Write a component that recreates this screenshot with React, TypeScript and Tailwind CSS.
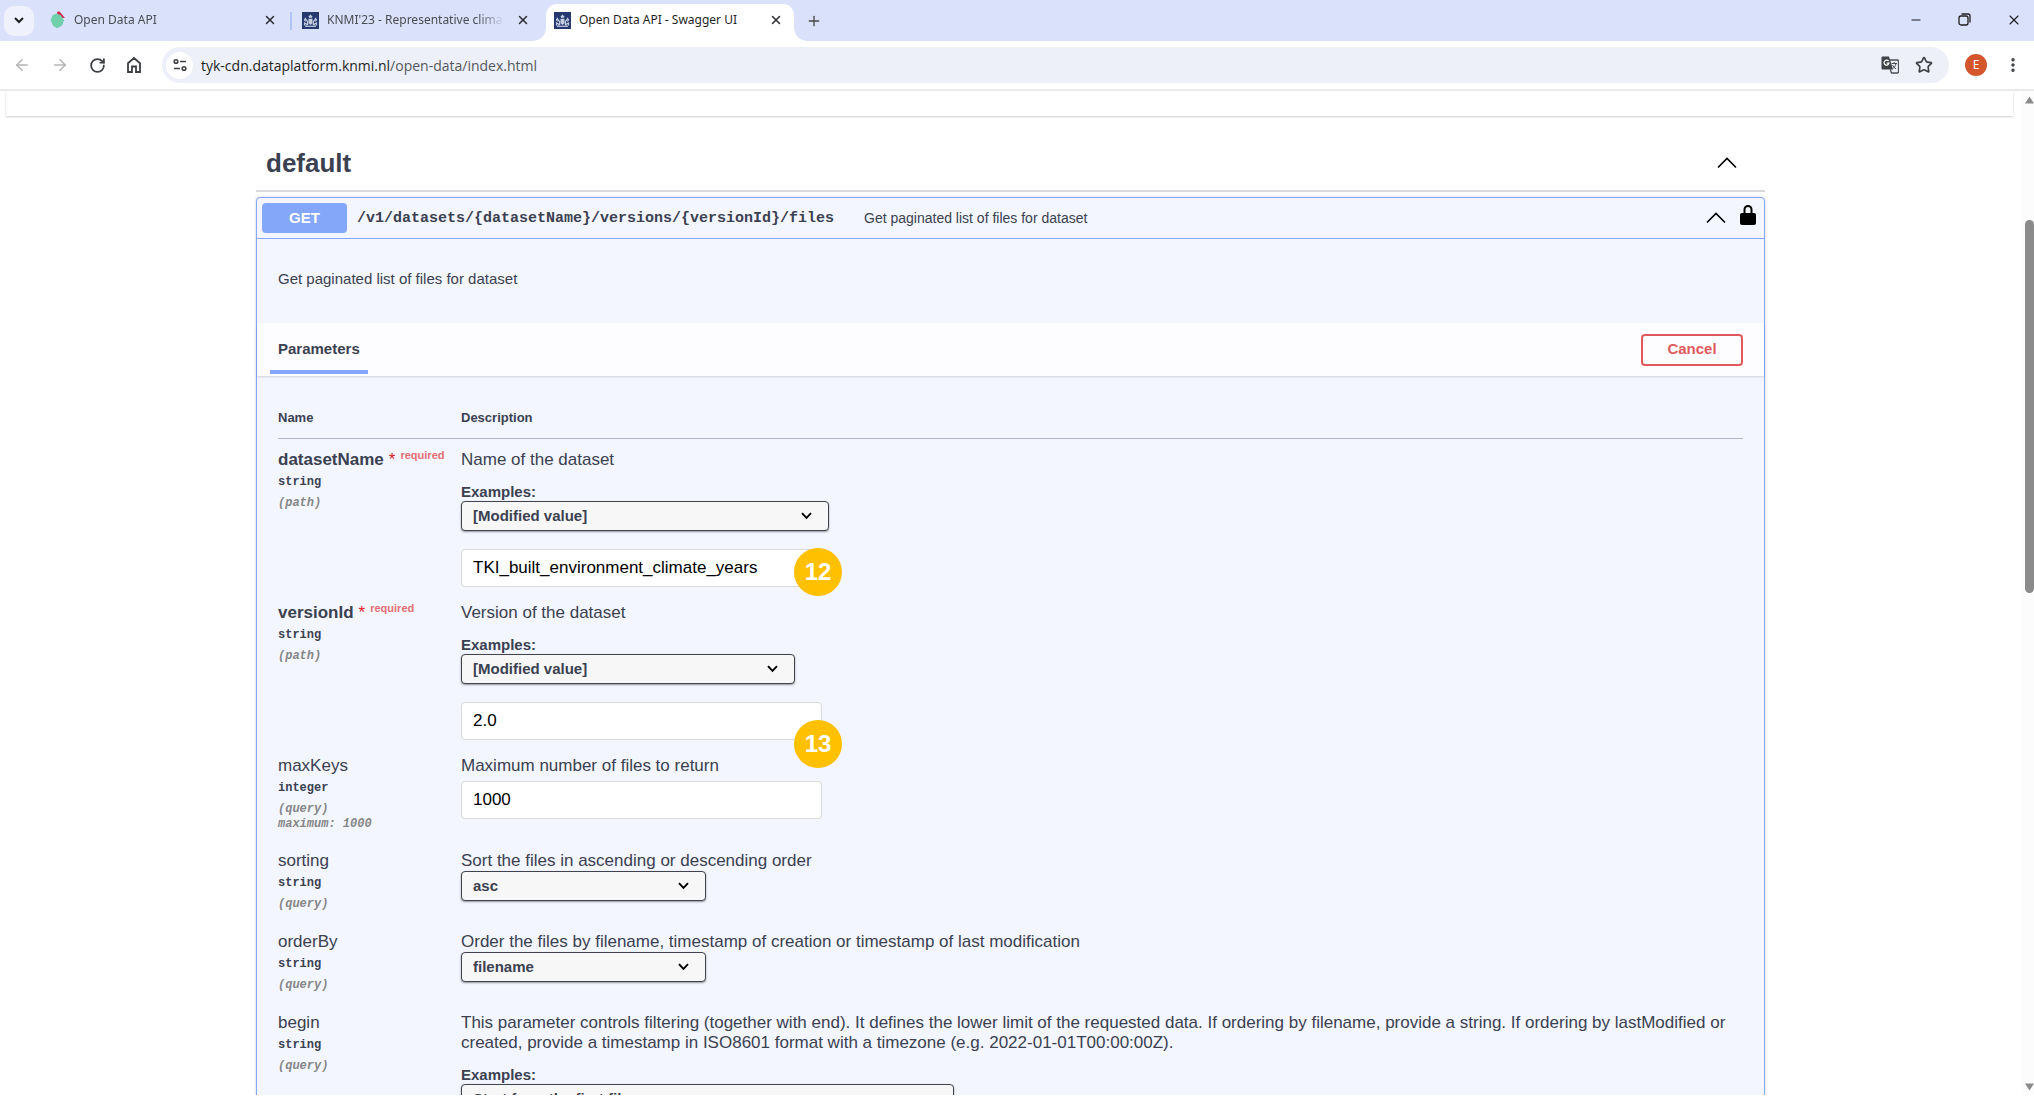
import React from 'react';
import { ArrowLeft, ArrowRight, Minus, MoreVertical, Plus, RotateCw, Star, X } from 'lucide-react';

interface Param {
  name: string;
  type: string;
  location: string;
  required?: boolean;
  note?: string;
  description: string;
  example?: string;
  exampleWidth?: string;
  select?: string;
  value?: string;
  badge?: string;
  badgePosition?: string;
}

const params: Param[] = [
  {
    name: 'datasetName',
    type: 'string',
    location: '(path)',
    required: true,
    description: 'Name of the dataset',
    example: '[Modified value]',
    exampleWidth: 'w-[368px]',
    value: 'TKI_built_environment_climate_years',
    badge: '12',
    badgePosition: '-top-px',
  },
  {
    name: 'versionId',
    type: 'string',
    location: '(path)',
    required: true,
    description: 'Version of the dataset',
    example: '[Modified value]',
    exampleWidth: 'w-[334px]',
    value: '2.0',
    badge: '13',
    badgePosition: 'top-[18px]',
  },
  {
    name: 'maxKeys',
    type: 'integer',
    location: '(query)',
    note: 'maximum: 1000',
    description: 'Maximum number of files to return',
    value: '1000',
  },
  {
    name: 'sorting',
    type: 'string',
    location: '(query)',
    description: 'Sort the files in ascending or descending order',
    select: 'asc',
  },
  {
    name: 'orderBy',
    type: 'string',
    location: '(query)',
    description: 'Order the files by filename, timestamp of creation or timestamp of last modification',
    select: 'filename',
  },
  {
    name: 'begin',
    type: 'string',
    location: '(query)',
    description:
      'This parameter controls filtering (together with end). It defines the lower limit of the requested data. If ordering by filename, provide a string. If ordering by lastModified or created, provide a timestamp in ISO8601 format with a timezone (e.g. 2022-01-01T00:00:00Z).',
    example: 'Start from the first file',
    exampleWidth: 'w-[493px]',
  },
];

const LeafIcon = () => (
  <svg width="16" height="18" viewBox="0 0 16 18" className="shrink-0">
    <path d="M6.500 2.500C3.500 3 1.500 5 1.200 8L.5 10l1.200 1c.5 2.500 1.500 4 2.500 4.500l2.800 1.800 3-1.500c2-.8 3-2.500 3.200-4.500l1-1.300-.9-1.500c0-1.500-.3-2.500-1-3.500L9 2.800z" fill="#6fd0ab" />
    <path d="M7 .8 9.500.5 15 7l-2.500-.2L10.500 4 7.500 3z" fill="#d81f45" />
  </svg>
);

const CrestIcon = () => (
  <svg width="17" height="17" viewBox="0 0 17 17" className="shrink-0">
    <rect width="17" height="17" fill="#25396f" />
    <g fill="#c5cde0">
      <path d="M8.500 2.200 9.200 3.500l1.300.6-.6 1.700H7.100l-.6-1.700 1.300-.6z" />
      <path d="M6.500 6.800h4v4.500L8.500 13l-2-1.700z" />
    </g>
    <g fill="none" stroke="#c5cde0" strokeWidth="1.200">
      <path d="M5.600 13.200V9.500L4.200 8l-.8-1.500L2.500 8l1.200 1.500M2.500 13.500V11l1.800.8v1.700" />
      <path d="M11.400 13.200V9.500L12.800 8l.8-1.500.9 1.500-1.200 1.500M14.500 13.500V11l-1.800.8v1.700" />
      <path d="M3 14.300h11" />
    </g>
  </svg>
);

const HomeIcon = () => (
  <svg width="16" height="18" viewBox="0 0 16 18" fill="none" stroke="#3c3f43" strokeWidth="1.800">
    <path d="M2 7.200 8 2l6 5.200V16h-4v-5.500H6V16H2z" />
  </svg>
);

const TuneIcon = () => (
  <svg width="14" height="14" viewBox="0 0 14 14" fill="none" stroke="#3c3f43" strokeWidth="1.600">
    <circle cx="3" cy="3.500" r="1.800" />
    <path d="M7 3.500h6M1 10.500h6" />
    <circle cx="11" cy="10.500" r="1.800" />
  </svg>
);

const TranslateIcon = () => (
  <svg width="18" height="18" viewBox="0 0 18 18">
    <path d="M1.500.5H8l4 13H1.500a1 1 0 0 1-1-1v-11a1 1 0 0 1 1-1z" fill="#3f4246" />
    <path d="M9 4h7.500a1 1 0 0 1 1 1v11a1 1 0 0 1-1 1h-6L9.300 13.500" fill="none" stroke="#4c4f54" strokeWidth="1.300" />
    <path d="M7.600 5.200A2.500 2.500 0 1 0 8 7.200H5.600" fill="none" stroke="#fff" strokeWidth="1.200" />
    <path d="M10.500 7.500h5.500M13.200 6.200v1.300M15 7.500c-.5 2.500-2 4.500-3.600 5.500M11.500 9c.8 1.500 2 3 3.500 4" fill="none" stroke="#4c4f54" />
  </svg>
);

const ChevronUpThin = () => (
  <svg width="20" height="12" viewBox="0 0 20 12" fill="none" stroke="#000" strokeWidth="1.600">
    <path d="M1 10.500 10 1.500l9 9" />
  </svg>
);

const LockIcon = () => (
  <svg width="16" height="20" viewBox="0 0 16 20">
    <path d="M4.500 9V4.500a3.500 3.500 0 0 1 7 0V9" fill="none" stroke="#000" strokeWidth="2" />
    <rect y="8" width="16" height="12" rx="2" />
  </svg>
);

const Tab = ({ icon, title, active }: { icon: React.ReactNode; title: string; active?: boolean }) => (
  <>
    {icon}
    <span
      className={
        active
          ? 'ml-2 flex-1 whitespace-nowrap text-[#1f1f1f]'
          : 'ml-2 flex-1 whitespace-nowrap text-[#4a4d52] [mask-image:linear-gradient(to_right,black_85%,transparent)]'
      }
    >
      {title}
    </span>
    <button aria-label="Close tab" className="ml-3 text-[#303236]">
      <X size={14} strokeWidth={2.6} />
    </button>
  </>
);

const TabStrip = () => (
  <div className="flex h-[41px] shrink-0 items-center bg-[#d9e1fb] font-['Noto_Sans',sans-serif] text-[12px]">
    <button aria-label="Search tabs" className="ml-1 flex h-[30px] w-[30px] shrink-0 items-center justify-center rounded-[10px] bg-[#eff2fd]">
      <svg width="10" height="7" viewBox="0 0 10 7" fill="none" stroke="#1f1f1f" strokeWidth="2">
        <path d="m1 1 4 4 4-4" />
      </svg>
    </button>
    <div className="ml-4 flex h-full w-[240px] items-center pr-[13px] pb-px">
      <Tab icon={<LeafIcon />} title="Open Data API" />
    </div>
    <div className="h-[18px] w-[2px] bg-[#b3c3f8]" />
    <div className="ml-[10px] flex h-full w-[244px] items-center pr-[16px] pb-px">
      <Tab icon={<CrestIcon />} title="KNMI'23 - Representative clima" />
    </div>
    <div className="relative flex h-[37px] w-[248px] items-center self-end rounded-t-[11px] bg-white px-2 pr-[11px] pb-[5px]">
      <Tab icon={<CrestIcon />} title="Open Data API - Swagger UI" active />
      {/* curved feet */}
      <div className="absolute bottom-0 -left-3 h-3 w-3 bg-[radial-gradient(circle_at_0_0,transparent_11px,white_12px)]" />
      <div className="absolute -right-3 bottom-0 h-3 w-3 bg-[radial-gradient(circle_at_100%_0,transparent_11px,white_12px)]" />
    </div>
    <button aria-label="New tab" className="ml-3 text-[#474747]">
      <Plus size={16} strokeWidth={2} />
    </button>
    <div className="mr-3 ml-auto flex items-center gap-[35px] pb-[2px] text-[#1f1f1f]">
      <button aria-label="Minimize">
        <Minus size={14} strokeWidth={1.8} />
      </button>
      <button aria-label="Restore">
        <svg width="13" height="13" viewBox="0 0 13 13" fill="none" stroke="currentColor" strokeWidth="1.300">
          <rect x="1" y="3" width="9" height="9" rx="2" />
          <path d="M3.500 1H10a2 2 0 0 1 2 2v6.500" />
        </svg>
      </button>
      <button aria-label="Close">
        <X size={16} strokeWidth={1.6} />
      </button>
    </div>
  </div>
);

const Toolbar = () => (
  <div className="flex h-[50px] shrink-0 items-center border-b-2 border-[#e9eaec] bg-white font-['Open_Sans',sans-serif]">
    <div className="ml-[13px] flex items-center gap-5">
      <button aria-label="Back" className="text-[#b4b5b7]">
        <ArrowLeft size={18} />
      </button>
      <button aria-label="Forward" className="text-[#b4b5b7]">
        <ArrowRight size={18} />
      </button>
      <button aria-label="Reload" className="text-[#3c3f43]">
        <RotateCw size={17} strokeWidth={2.5} />
      </button>
      <button aria-label="Home">
        <HomeIcon />
      </button>
    </div>
    <div className="ml-5 flex h-9 flex-1 items-center rounded-full bg-[#edf0f9] pl-1">
      <button aria-label="Site information" className="flex h-[27px] w-[27px] items-center justify-center rounded-full bg-white">
        <TuneIcon />
      </button>
      <p className="ml-2 text-[14px] text-[#55585c]">
        <span className="text-[#1f1f1f]">tyk-cdn.dataplatform.knmi.nl</span>/open-data/index.html
      </p>
      <button aria-label="Translate" className="mr-4 ml-auto">
        <TranslateIcon />
      </button>
      <button aria-label="Bookmark" className="mr-4 text-[#3c3f43]">
        <Star size={18} strokeWidth={2.2} />
      </button>
    </div>
    <div className="mx-4 flex h-[22px] w-[22px] items-center justify-center rounded-full bg-[#d3562d] text-[12px] text-white">E</div>
    <button aria-label="Menu" className="mr-3 ml-px text-[#3c3f43]">
      <MoreVertical size={18} strokeWidth={2.6} />
    </button>
  </div>
);

const SelectBox = ({ id, label, width }: { id: string; label: string; width: string }) => (
  <div className={`relative ${width}`}>
    <select
      id={id}
      aria-label={id}
      className="block h-[30px] w-full appearance-none rounded border border-[#41444e] bg-[#f7f7f7] pl-[11px] text-[15px] leading-[18px] font-bold shadow-[0_1px_2px_rgba(0,0,0,0.4)]"
    >
      <option>{label}</option>
    </select>
    <svg width="11" height="8" viewBox="0 0 11 8" fill="none" stroke="#000" strokeWidth="1.900" className="pointer-events-none absolute top-[11px] right-[17px]">
      <path d="m1 1.200 4.500 4.600L10 1.200" />
    </svg>
  </div>
);

const ParamRow = ({ param }: { param: Param }) => (
  <tr className="align-top">
    <td className="w-[183px] py-[10px]">
      <div className={param.required ? 'text-[17px] leading-5 font-bold' : 'text-[17px] leading-5'}>
        {param.name}
        {param.required && (
          <>
            <span className="ml-[5px] font-normal text-[#e02020]">*</span>
            <span className="relative -top-1.5 ml-[5px] text-[11px] leading-none font-bold text-[#e46f72]">required</span>
          </>
        )}
      </div>
      <div className="mt-1 font-['Liberation_Mono',monospace] text-[12px] leading-4 font-bold">{param.type}</div>
      <div className="mt-1.5 font-['Liberation_Mono',monospace] text-[12px] leading-[15px] font-bold text-[#868686] italic">{param.location}</div>
      {param.note && (
        <div className="font-['Liberation_Mono',monospace] text-[12px] leading-[14px] font-bold text-[#868686] italic">{param.note}</div>
      )}
    </td>
    <td className="pt-[10px] pb-1.5">
      <p className="text-[17px] leading-5">{param.description}</p>
      {param.example && (
        <div className="mt-[13px]">
          <label htmlFor={`${param.name}-example`} className="block text-[15px] leading-[18px] font-bold">
            Examples:
          </label>
          <SelectBox id={`${param.name}-example`} label={param.example} width={param.exampleWidth ?? 'w-[368px]'} />
        </div>
      )}
      {param.select && <SelectBox id={param.name} label={param.select} width="w-[245px]" />}
      {param.value && (
        <div className={param.example ? 'relative mt-[18px] w-[361px]' : 'mt-[5px] w-[361px]'}>
          <input
            type="text"
            aria-label={param.name}
            defaultValue={param.value}
            className="block h-[38px] w-full rounded border border-[#d9d9d9] bg-white px-[11px] text-[17px] text-black"
          />
          {param.badge && (
            <span
              className={`absolute -right-5 ${param.badgePosition} z-10 flex h-12 w-12 items-center justify-center rounded-full bg-[#ffc000] text-2xl font-bold text-white`}
            >
              {param.badge}
            </span>
          )}
        </div>
      )}
    </td>
  </tr>
);

const Operation = () => (
  <section className="mt-[5px] rounded border border-[#85a7fa] bg-[#f3f6fe] shadow-[0_0_3px_rgba(0,0,0,0.19)]">
    <div className="flex h-[41px] items-center border-b border-[#85a7fa] pr-2 pl-[5px]">
      <span className="flex h-[30px] w-[85px] items-center justify-center rounded bg-[#85a7fa] text-[15px] font-bold text-white">GET</span>
      <a href="#files" className="ml-[10px] w-[507px] pt-[2px] font-['Liberation_Mono',monospace] text-[15px] font-bold">
        /v1/datasets/{'{datasetName}'}/versions/{'{versionId}'}/files
      </a>
      <span className="text-[14px]">Get paginated list of files for dataset</span>
      <button aria-label="Collapse operation" className="ml-auto">
        <ChevronUpThin />
      </button>
      <button aria-label="Authorize" className="mb-[6px] ml-[14px]">
        <LockIcon />
      </button>
    </div>
    <p className="px-[21px] pt-[31px] pb-[35px] text-[15px] leading-[18px]">Get paginated list of files for dataset</p>
    <div className="flex h-[53px] items-center justify-between bg-[#fdfdff] pr-[21px] pl-[13px] shadow-[0_1px_2px_rgba(0,0,0,0.15)]">
      <h4 className="flex h-[51px] items-center self-start border-t-4 border-b-4 border-t-transparent border-b-[#85a7fa] px-2 pt-[2px] text-[15px] font-bold">
        Parameters
      </h4>
      <button className="h-8 w-[102px] rounded border-2 border-[#e05a5c] text-[15px] font-bold text-[#e05a5c]">Cancel</button>
    </div>
    <div className="px-[21px] pt-[22px]">
      <table className="w-full border-collapse text-left">
        <thead>
          <tr className="border-b border-[#b1b5c3] text-[13px] leading-4">
            <th className="py-3">Name</th>
            <th className="py-3">Description</th>
          </tr>
          <tr aria-hidden="true" className="h-px" />
        </thead>
        <tbody>
          {params.map(param => (
            <ParamRow key={param.name} param={param} />
          ))}
        </tbody>
      </table>
    </div>
  </section>
);

const ScrollBar = () => (
  <div className="flex w-3 shrink-0 flex-col bg-[#fcfcfc] pl-[3px]">
    <svg width="9" height="8" viewBox="0 0 9 8" className="mt-[5px]">
      <path d="M0 7.500 4.500.5 9 7.500z" fill="#8b8b8b" />
    </svg>
    <div className="mt-[116px] h-[373px] rounded-full bg-[#8b8b8b]" />
    <svg width="9" height="8" viewBox="0 0 9 8" className="mt-auto mb-1">
      <path d="M0 .5 4.500 7.500 9 .5z" fill="#8b8b8b" />
    </svg>
  </div>
);

const App: React.FC = () => (
  <div className="flex h-screen flex-col overflow-hidden bg-white pb-[9px] font-['Liberation_Sans',Arial,sans-serif] text-[#3b4151]">
    <TabStrip />
    <Toolbar />
    <div className="flex min-h-0 flex-1">
      <main className="min-w-0 flex-1 overflow-hidden pr-px">
        <div className="mr-2 ml-1.5 h-[25px] bg-white shadow-[0_1px_2px_rgba(0,0,0,0.2)]" />
        <div className="mx-auto max-w-[1509px] pt-[21px]">
          <div className="flex h-[55px] items-center justify-between border-b-2 border-[#d8d9dd] pr-7 pb-px pl-[10px]">
            <h3 className="text-[26px] leading-8 font-bold">default</h3>
            <button aria-label="Collapse section">
              <ChevronUpThin />
            </button>
          </div>
          <Operation />
        </div>
      </main>
      <ScrollBar />
    </div>
  </div>
);

export default App;
